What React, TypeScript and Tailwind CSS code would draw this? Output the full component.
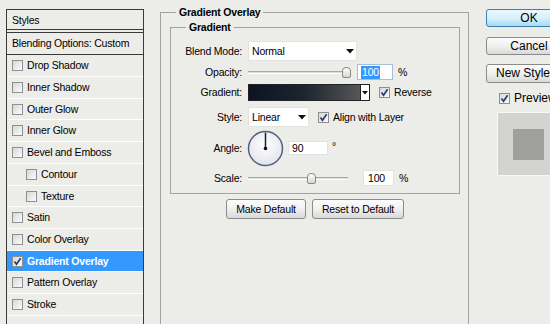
import React from 'react';

const STYLE_ROWS = [
    { label: 'Drop Shadow', h: 'h-[22px]' },
    { label: 'Inner Shadow', h: 'h-[22px]' },
    { label: 'Outer Glow', h: 'h-[21px]' },
    { label: 'Inner Glow', h: 'h-[22px]' },
    { label: 'Bevel and Emboss', h: 'h-[22px]' },
    { label: 'Contour', h: 'h-[22px]', sub: true },
    { label: 'Texture', h: 'h-[21px]', sub: true },
    { label: 'Satin', h: 'h-[22px]' },
    { label: 'Color Overlay', h: 'h-[22px]' },
    { label: 'Gradient Overlay', h: 'h-[21px]', active: true },
    { label: 'Pattern Overlay', h: 'h-[22px]' },
    { label: 'Stroke', h: 'h-[22px]' },
];

const Check = ({ checked }: { checked?: boolean }) => (
    <span className="w-[11px] h-[11px] border border-[#8e8f8f] bg-linear-to-br from-[#d8d8d8] to-[#fbfbfb] flex items-center justify-center shrink-0">
        {checked && (
            <svg width="9" height="9" viewBox="0 0 9 9">
                <path d="M1.5 4.5 L3.5 7.2 L7.6 1.2" fill="none" stroke="#2d3d6e" strokeWidth="1.7" />
            </svg>
        )}
    </span>
);

const Arrow = () => (
    <svg width="8" height="5" viewBox="0 0 8 5">
        <path d="M0 0 H8 L4 4.5 Z" fill="#111" />
    </svg>
);

const Slider = ({ width, thumb }: { width: number; thumb: number }) => (
    <div className="relative h-[16px] flex items-center" style={{ width }}>
        <div className="w-full h-[3px] border-t border-[#a8a8a4] border-b border-b-white bg-[#dcdcd8]" />
        <div
            className="absolute top-[3px] w-[9px] h-[11px] rounded-t-[4px] rounded-b-[2px] border border-[#888] bg-linear-to-b from-white to-[#d6d6d6]"
            style={{ left: thumb }}
        />
    </div>
);

const Btn = ({ children, className = '' }: { children: React.ReactNode; className?: string }) => (
    <div className={`flex items-center justify-center rounded-[3px] border border-[#8a8a8a] bg-linear-to-b from-[#fcfcfc] via-[#f0f0f0] to-[#d9d9d9] ${className}`}>
        {children}
    </div>
);

const Row = ({ label, className, children }: { label: string; className: string; children: React.ReactNode }) => (
    <div className={`flex items-center ${className}`}>
        <div className="w-[71px] text-right shrink-0">{label}</div>
        <div className="ml-[6px] flex items-center">{children}</div>
    </div>
);

export default function App() {
    return (
        <div className="w-[550px] h-[324px] overflow-hidden bg-[#ecece8] flex items-start text-[10.5px] tracking-[-0.2px] leading-[13px] text-black font-['Liberation_Sans',Arial,sans-serif]">
            {/* styles list */}
            <div className="mt-[9px] ml-[6px] w-[138px] h-[330px] shrink-0 border border-[#3a3a3a] flex flex-col">
                <div className="h-[19px] pl-[5px] pt-[2px] flex items-center">Styles</div>
                <div className="h-[4px] border-y border-[#3a3a3a]" />
                <div className="h-[22px] pl-[5px] flex items-center border-b border-[#3a3a3a]">Blending Options: Custom</div>
                {STYLE_ROWS.map(r => (
                    <div key={r.label} className={`${r.h} border-b border-white flex`}>
                        <div
                            className={`flex-1 flex items-center gap-[4px] ${r.sub ? 'pl-[19px]' : 'pl-[5px]'} ${
                                r.active ? 'bg-[#3399ff] text-white font-bold' : ''
                            }`}
                        >
                            <Check checked={r.active} />
                            <span>{r.label}</span>
                        </div>
                    </div>
                ))}
            </div>

            {/* settings */}
            <fieldset className="mt-[6px] ml-[16px] w-[309px] h-[340px] shrink-0 min-w-0 border border-[#a3a39f] pl-[9px] pr-[8px] pt-[2px]">
                <legend className="ml-[6px] px-[3px] font-bold">Gradient Overlay</legend>
                <fieldset className="w-[290px] min-w-0 border border-[#a3a39f] pt-[7px] pb-[7px]">
                    <legend className="ml-[15px] px-[3px] font-bold">Gradient</legend>
                    <Row label="Blend Mode:" className="h-[20px]">
                        <div className="w-[109px] h-[20px] bg-white border border-[#e2e2de] flex items-center justify-between pl-[3px] pr-[2px]">
                            <span>Normal</span>
                            <Arrow />
                        </div>
                    </Row>
                    <Row label="Opacity:" className="h-[16px] mt-[3px]">
                        <Slider width={103} thumb={94} />
                        <div className="ml-[6px] w-[36px] h-[16px] bg-white border border-[#a9bdd6] flex items-center pl-[3px]">
                            <span className="bg-[#3399ff] text-white px-[1px]">100</span>
                        </div>
                        <span className="ml-[5px]">%</span>
                    </Row>
                    <Row label="Gradient:" className="h-[17px] mt-[4px]">
                        <div className="flex h-[17px] border border-[#222]">
                            <div className="w-[111px] h-full bg-linear-to-r from-[#0c1424] via-[#1e2530] to-[#575757]" />
                            <div className="w-[9px] h-full bg-white border-l border-[#222] flex items-center justify-center">
                                <svg width="6" height="4" viewBox="0 0 6 4">
                                    <path d="M0 0 H6 L3 3.5 Z" fill="#111" />
                                </svg>
                            </div>
                        </div>
                        <span className="ml-[9px]">
                            <Check checked />
                        </span>
                        <span className="ml-[4px]">Reverse</span>
                    </Row>
                    <Row label="Style:" className="h-[20px] mt-[6px]">
                        <div className="w-[61px] h-[20px] bg-white border border-[#e2e2de] flex items-center justify-between pl-[3px] pr-[2px]">
                            <span>Linear</span>
                            <Arrow />
                        </div>
                        <span className="ml-[9px]">
                            <Check checked />
                        </span>
                        <span className="ml-[4px]">Align with Layer</span>
                    </Row>
                    <Row label="Angle:" className="h-[36px] mt-[3px]">
                        <svg width="37" height="37" viewBox="0 0 37 37" className="-ml-[1px]">
                            <defs>
                                <radialGradient id="dial" cx="50%" cy="40%" r="60%">
                                    <stop offset="0%" stopColor="#ffffff" />
                                    <stop offset="100%" stopColor="#e2e4ea" />
                                </radialGradient>
                            </defs>
                            <circle cx="18.5" cy="18.5" r="17" fill="url(#dial)" stroke="#55617f" strokeWidth="1.5" />
                            <line x1="18.5" y1="18.5" x2="18.5" y2="2.5" stroke="#222" strokeWidth="1.5" />
                            <circle cx="18.5" cy="18.5" r="1.8" fill="#111" />
                        </svg>
                        <div className="ml-[4px] w-[40px] h-[14px] bg-white border border-[#e2e2de] flex items-center pl-[3px]">90</div>
                        <span className="ml-[4px] -mt-[4px]">°</span>
                    </Row>
                    <Row label="Scale:" className="h-[16px] mt-[4px]">
                        <Slider width={100} thumb={59} />
                        <div className="ml-[15px] w-[31px] h-[16px] bg-white border border-[#e2e2de] flex items-center pl-[4px]">100</div>
                        <span className="ml-[5px]">%</span>
                    </Row>
                </fieldset>
                <div className="mt-[5px] flex justify-center gap-[6px]">
                    <Btn className="w-[80px] h-[20px]">Make Default</Btn>
                    <Btn className="w-[92px] h-[20px]">Reset to Default</Btn>
                </div>
            </fieldset>

            {/* buttons */}
            <div className="ml-[17px] mt-[9px] w-[86px] shrink-0 flex flex-col tracking-normal">
                <div className="h-[18px] rounded-[3px] border border-[#3c7fb1] bg-linear-to-b from-[#eaf6fd] via-[#d9f0fc] to-[#a7d9f5] flex items-center justify-center text-[12px]">
                    OK
                </div>
                <Btn className="h-[18px] mt-[10px] text-[12px]">Cancel</Btn>
                <Btn className="h-[19px] mt-[9px] text-[12px] !justify-start pl-[9px]">New Style...</Btn>
                <div className="mt-[9px] h-[12px] flex items-center gap-[4px] pl-[13px] text-[12px]">
                    <Check checked />
                    <span>Preview</span>
                </div>
                <div className="mt-[8px] ml-[11px] w-[60px] h-[64px] border border-[#f8f8f6] bg-[#d3d3d0] pl-[15px] pt-[16px]">
                    <div className="w-[31px] h-[31px] bg-[#9f9f9d]" />
                </div>
            </div>
        </div>
    );
}
